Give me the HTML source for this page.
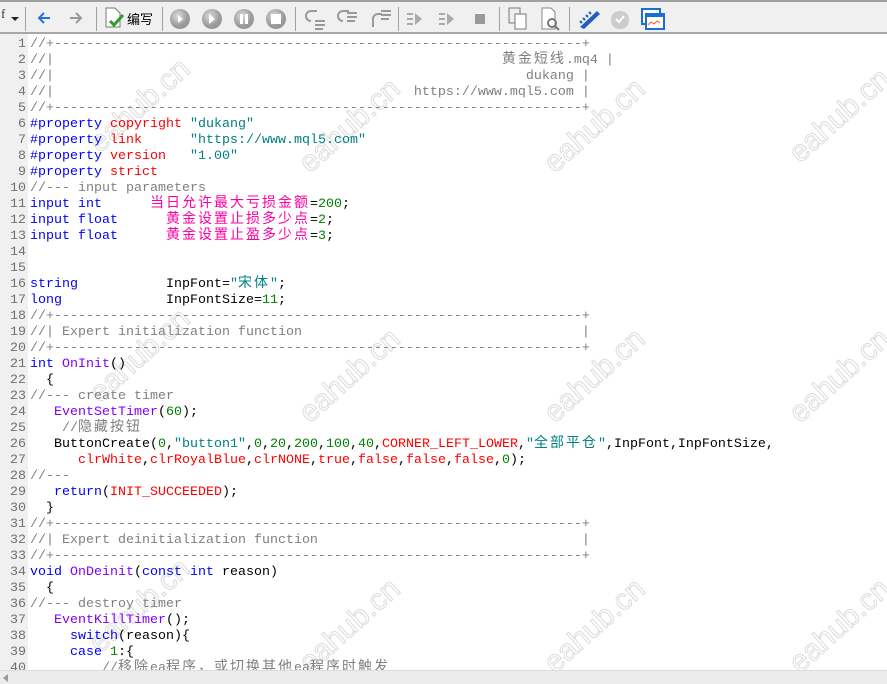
<!DOCTYPE html>
<html><head><meta charset="utf-8"><style>
*{margin:0;padding:0;box-sizing:border-box}
body{width:887px;height:684px;overflow:hidden;background:#fff;position:relative;font-family:"Liberation Mono",monospace}
#tb{position:absolute;left:0;top:0;width:887px;height:34px;background:#f0f0f0;border-top:2px solid #a0a0a0;border-bottom:2px solid #a8a8a8;z-index:2}
.sep{position:absolute;top:5px;width:1px;height:24px;background:#a0a0a0}
.ic{position:absolute}
#gut{position:absolute;left:0;top:34px;width:28px;height:636px;background:#f0f0f0}
#code{position:absolute;left:0;top:37px;width:887px}
.l{height:16px;line-height:16px;font-size:13.33px;white-space:pre;position:relative}
.n{position:absolute;left:0;top:0;width:26px;text-align:right;color:#707070}
.t{position:absolute;left:30px;top:0;line-height:16px}
.c{color:#808080}.k{color:#0000ff}.r{color:#ff0000}.s{color:#008080}.g{color:#008000}.p{color:#8000ff}
.z{font-family:"Noto Sans CJK SC",sans-serif;font-size:14px;letter-spacing:2px;line-height:0;vertical-align:baseline}
.m{color:#ff00a0}
#sb{position:absolute;left:0;top:670px;width:887px;height:14px;background:#ececec;border-top:1px solid #dcdcdc;z-index:2}
</style></head><body>
<div id="tb">
<div style="position:absolute;left:1px;top:4px;font:13px 'Liberation Serif',serif;color:#333">f</div>
<div style="position:absolute;left:11px;top:15px;width:0;height:0;border-left:4px solid transparent;border-right:4px solid transparent;border-top:4px solid #222"></div>
<div class="sep" style="left:25px"></div>
<svg class="ic" style="left:36px;top:8px" width="16" height="16"><path d="M14 8H3M8 3L3 8l5 5" stroke="#2a6fd6" stroke-width="2" fill="none"/></svg>
<svg class="ic" style="left:68px;top:8px" width="16" height="16"><path d="M2 8h11M8 3l5 5-5 5" stroke="#999" stroke-width="2" fill="none"/></svg>
<div class="sep" style="left:96px"></div>
<svg class="ic" style="left:104px;top:5px" width="24" height="24"><path d="M2 1h9l5 5v14H2z" fill="#fff" stroke="#777"/><path d="M6 14l4 4 9-10" stroke="#2a9d2a" stroke-width="3" fill="none"/></svg>
<div style="position:absolute;left:127px;top:7px;font:13px 'Noto Sans CJK SC',sans-serif;color:#000">编写</div>
<div class="sep" style="left:162px"></div>
<svg class="ic" style="left:168px;top:5px" width="120" height="24"><defs><radialGradient id="gg" cx="40%" cy="35%"><stop offset="0" stop-color="#ddd"/><stop offset="1" stop-color="#999"/></radialGradient></defs>
<circle cx="12" cy="12" r="10" fill="url(#gg)"/><path d="M10 8l5 4-5 4z" fill="#fff"/>
<circle cx="44" cy="12" r="10" fill="url(#gg)"/><path d="M41 7l6 5-6 5z" fill="#fff"/>
<circle cx="76" cy="12" r="10" fill="url(#gg)"/><rect x="72" y="7" width="3" height="10" fill="#fff"/><rect x="77" y="7" width="3" height="10" fill="#fff"/>
<circle cx="108" cy="12" r="10" fill="url(#gg)"/><rect x="103" y="7" width="10" height="10" fill="#fff"/></svg>
<div class="sep" style="left:295px"></div>
<svg class="ic" style="left:303px;top:5px" width="90" height="24" stroke="#999" stroke-width="2" fill="none"><path d="M14 4h-6a5 5 0 0 0 0 10M12 14h10M12 18h10M12 22h8"/><path d="M46 4h-6a5 5 0 0 0 0 10M44 6h10M44 10h10M44 14h8"/><path d="M70 20v-8a5 5 0 0 1 5-5h4M78 4h10M78 8h10M78 12h8"/></svg>
<div class="sep" style="left:398px"></div>
<svg class="ic" style="left:405px;top:9px" width="85" height="16" fill="#aaa"><path d="M2 3h6M2 8h6M2 13h6" stroke="#aaa" stroke-width="2"/><path d="M10 2l7 6-7 6z"/><path d="M34 3h6M34 8h6M34 13h6" stroke="#aaa" stroke-width="2"/><path d="M42 2l7 6-7 6z"/><rect x="70" y="3" width="10" height="10" fill="#999"/></svg>
<div class="sep" style="left:499px"></div>
<svg class="ic" style="left:507px;top:5px" width="55" height="24"><rect x="2" y="1" width="11" height="15" fill="#eee" stroke="#777"/><rect x="8" y="7" width="11" height="15" fill="#fff" stroke="#777"/><path d="M35 1h9l4 4v17H35z" fill="#fff" stroke="#888"/><circle cx="45" cy="16" r="4" fill="none" stroke="#777" stroke-width="2"/><path d="M48 19l4 4" stroke="#777" stroke-width="2"/></svg>
<div class="sep" style="left:569px"></div>
<svg class="ic" style="left:577px;top:5px" width="90" height="24"><path d="M3 20L20 4l3 3L7 22z" fill="#1f5fbf"/><path d="M5 16l-2 -2M8 13l-2-2M11 10l-2-2M14 7l-2-2" stroke="#1f5fbf" stroke-width="2"/><path d="M43 4c5 0 9 3 9 9s-4 9-9 9-9-3-9-9 4-9 9-9z" fill="#ccc"/><path d="M39 12l3 3 5-6" stroke="#fff" stroke-width="2" fill="none"/><rect x="65" y="2" width="18" height="15" fill="#fff" stroke="#1a6fd0" stroke-width="2"/><rect x="69" y="7" width="18" height="15" fill="#fff" stroke="#1a6fd0" stroke-width="2"/><rect x="69" y="7" width="18" height="3" fill="#1a6fd0"/><path d="M71 18l3-3 3 2 3-3 3 2" stroke="#f06020" fill="none"/></svg>
</div>
<div id="gut"></div>
<svg style="position:absolute;left:0;top:34px" width="887" height="636"><g font-family="Liberation Sans,sans-serif" font-size="30" fill="none" stroke="#dcdcdc" stroke-width="1">
<text transform="translate(100,120) rotate(-42)">eahub.cn</text><text transform="translate(310,140) rotate(-42)">eahub.cn</text><text transform="translate(555,140) rotate(-42)">eahub.cn</text><text transform="translate(800,130) rotate(-42)">eahub.cn</text>
<text transform="translate(100,370) rotate(-42)">eahub.cn</text><text transform="translate(310,390) rotate(-42)">eahub.cn</text><text transform="translate(555,390) rotate(-42)">eahub.cn</text><text transform="translate(800,390) rotate(-42)">eahub.cn</text>
<text transform="translate(100,620) rotate(-42)">eahub.cn</text><text transform="translate(310,640) rotate(-42)">eahub.cn</text><text transform="translate(555,640) rotate(-42)">eahub.cn</text><text transform="translate(800,640) rotate(-42)">eahub.cn</text>
</g></svg>
<div id="code">
<div class="l"><span class="n">1</span><span class="t c">//+------------------------------------------------------------------+</span></div>
<div class="l"><span class="n">2</span><span class="t c">//|                                                        <span class="z">黄金短线</span>.mq4 |</span></div>
<div class="l"><span class="n">3</span><span class="t c">//|                                                           dukang |</span></div>
<div class="l"><span class="n">4</span><span class="t c">//|                                             https://www.mql5.com |</span></div>
<div class="l"><span class="n">5</span><span class="t c">//+------------------------------------------------------------------+</span></div>
<div class="l"><span class="n">6</span><span class="t"><span class="k">#property</span> <span class="r">copyright</span> <span class="s">"dukang"</span></span></div>
<div class="l"><span class="n">7</span><span class="t"><span class="k">#property</span> <span class="r">link</span>      <span class="s">"https://www.mql5.com"</span></span></div>
<div class="l"><span class="n">8</span><span class="t"><span class="k">#property</span> <span class="r">version</span>   <span class="s">"1.00"</span></span></div>
<div class="l"><span class="n">9</span><span class="t"><span class="k">#property</span> <span class="r">strict</span></span></div>
<div class="l"><span class="n">10</span><span class="t c">//--- input parameters</span></div>
<div class="l"><span class="n">11</span><span class="t"><span class="k">input int</span>      <span class="z m">当日允许最大亏损金额</span>=<span class="g">200</span>;</span></div>
<div class="l"><span class="n">12</span><span class="t"><span class="k">input float</span>      <span class="z m">黄金设置止损多少点</span>=<span class="g">2</span>;</span></div>
<div class="l"><span class="n">13</span><span class="t"><span class="k">input float</span>      <span class="z m">黄金设置止盈多少点</span>=<span class="g">3</span>;</span></div>
<div class="l"><span class="n">14</span></div>
<div class="l"><span class="n">15</span></div>
<div class="l"><span class="n">16</span><span class="t"><span class="k">string</span>           InpFont=<span class="s">"<span class="z">宋体</span>"</span>;</span></div>
<div class="l"><span class="n">17</span><span class="t"><span class="k">long</span>             InpFontSize=<span class="g">11</span>;</span></div>
<div class="l"><span class="n">18</span><span class="t c">//+------------------------------------------------------------------+</span></div>
<div class="l"><span class="n">19</span><span class="t c">//| Expert initialization function                                   |</span></div>
<div class="l"><span class="n">20</span><span class="t c">//+------------------------------------------------------------------+</span></div>
<div class="l"><span class="n">21</span><span class="t"><span class="k">int</span> <span class="p">OnInit</span>()</span></div>
<div class="l"><span class="n">22</span><span class="t">  {</span></div>
<div class="l"><span class="n">23</span><span class="t c">//--- create timer</span></div>
<div class="l"><span class="n">24</span><span class="t">   <span class="p">EventSetTimer</span>(<span class="g">60</span>);</span></div>
<div class="l"><span class="n">25</span><span class="t c">    //<span class="z">隐藏按钮</span></span></div>
<div class="l"><span class="n">26</span><span class="t">   ButtonCreate(<span class="g">0</span>,<span class="s">"button1"</span>,<span class="g">0</span>,<span class="g">20</span>,<span class="g">200</span>,<span class="g">100</span>,<span class="g">40</span>,<span class="r">CORNER_LEFT_LOWER</span>,<span class="s">"<span class="z">全部平仓</span>"</span>,InpFont,InpFontSize,</span></div>
<div class="l"><span class="n">27</span><span class="t">      <span class="r">clrWhite</span>,<span class="r">clrRoyalBlue</span>,<span class="r">clrNONE</span>,<span class="r">true</span>,<span class="r">false</span>,<span class="r">false</span>,<span class="r">false</span>,<span class="g">0</span>);</span></div>
<div class="l"><span class="n">28</span><span class="t c">//---</span></div>
<div class="l"><span class="n">29</span><span class="t">   <span class="k">return</span>(<span class="r">INIT_SUCCEEDED</span>);</span></div>
<div class="l"><span class="n">30</span><span class="t">  }</span></div>
<div class="l"><span class="n">31</span><span class="t c">//+------------------------------------------------------------------+</span></div>
<div class="l"><span class="n">32</span><span class="t c">//| Expert deinitialization function                                 |</span></div>
<div class="l"><span class="n">33</span><span class="t c">//+------------------------------------------------------------------+</span></div>
<div class="l"><span class="n">34</span><span class="t"><span class="k">void</span> <span class="p">OnDeinit</span>(<span class="k">const int</span> reason)</span></div>
<div class="l"><span class="n">35</span><span class="t">  {</span></div>
<div class="l"><span class="n">36</span><span class="t c">//--- destroy timer</span></div>
<div class="l"><span class="n">37</span><span class="t">   <span class="p">EventKillTimer</span>();</span></div>
<div class="l"><span class="n">38</span><span class="t">     <span class="k">switch</span>(reason){</span></div>
<div class="l"><span class="n">39</span><span class="t">     <span class="k">case</span> <span class="g">1</span>:{</span></div>
<div class="l"><span class="n">40</span><span class="t c">         //<span class="z">移除</span>ea<span class="z">程序，或切换其他</span>ea<span class="z">程序时触发</span></span></div>
</div>
<div id="sb"><div style="position:absolute;left:3px;top:3px;width:0;height:0;border-top:4px solid transparent;border-bottom:4px solid transparent;border-right:5px solid #999"></div></div>
</body></html>
